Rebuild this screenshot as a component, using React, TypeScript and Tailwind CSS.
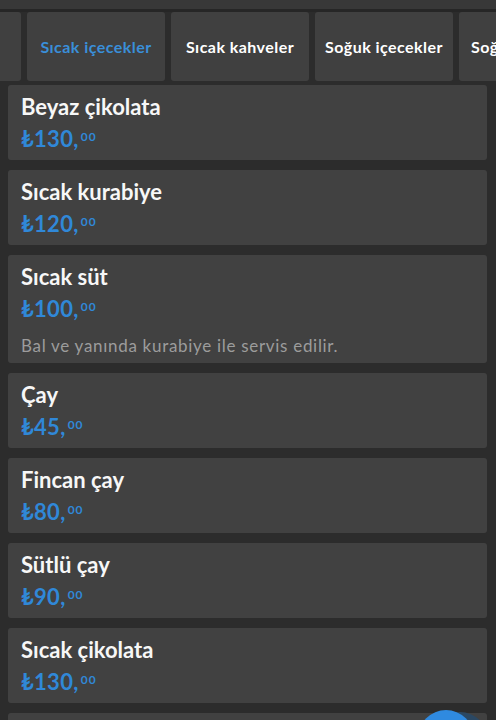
import React from "react";

const tabs = ["Sıcak içecekler (tümü)", "Sıcak içecekler", "Sıcak kahveler", "Soğuk içecekler", "Soğuk kahveler"];

type Item = { name: string; price: string; desc?: string };
const items: Item[] = [
  { name: "Beyaz çikolata", price: "130" },
  { name: "Sıcak kurabiye", price: "120" },
  { name: "Sıcak süt", price: "100", desc: "Bal ve yanında kurabiye ile servis edilir." },
  { name: "Çay", price: "45" },
  { name: "Fincan çay", price: "80" },
  { name: "Sütlü çay", price: "90" },
  { name: "Sıcak çikolata", price: "130" },
  { name: "Salep", price: "110" },
];

export default function App() {
  return (
    <div className="relative w-[496px] h-[720px] overflow-hidden bg-[#2c2c2c] font-['Lato','DejaVu_Sans',sans-serif]">
      <div className="h-[9px] bg-[#383838]" />
      <div className="h-[3px] bg-[#262626]" />
      <div className="flex gap-[6px] ml-[-117px]">
        {tabs.map((t, i) => (
          <div
            key={t}
            className={`shrink-0 w-[138px] h-[69px] rounded-[3px] bg-[#404040] flex items-center overflow-hidden whitespace-nowrap text-[16px] tracking-[0.45px] font-bold ${
              i === 1 ? "text-[#3a8fd9]" : "text-white"
            } ${i === 4 ? "justify-start pl-[12px]" : "justify-center"}`}
          >
            {i === 0 ? "" : t}
          </div>
        ))}
      </div>
      <div className="flex flex-col gap-[10px] pt-[4px] pl-[8px] pr-[9px]">
        {items.map((it) => (
          <div key={it.name} className="rounded-[3px] bg-[#414141] pl-[13px] pr-3 pt-[6px] pb-[5px]">
            <div className="text-[#f7f7f7] font-bold text-[22px] leading-[31px]">{it.name}</div>
            <div className="flex items-start text-[#3088d8] font-bold h-[33px]">
              <span className="text-[22px] leading-[33px] tracking-[0.3px]">₺{it.price},</span>
              <span className="text-[12px] leading-[12px] tracking-[1px] mt-[9px] ml-[2px]">00</span>
            </div>
            {it.desc && (
              <div className="mt-[9px] text-[17px] leading-[24px] tracking-[0.7px] text-[#9c9c9c]">{it.desc}</div>
            )}
          </div>
        ))}
      </div>
      <div className="absolute left-[432px] top-[712px] w-[56px] h-[56px] rounded-full bg-[#2b4863]" />
      <div className="absolute left-[418px] top-[710px] w-[56px] h-[56px] rounded-full bg-[#2f8ae0]" />
    </div>
  );
}
